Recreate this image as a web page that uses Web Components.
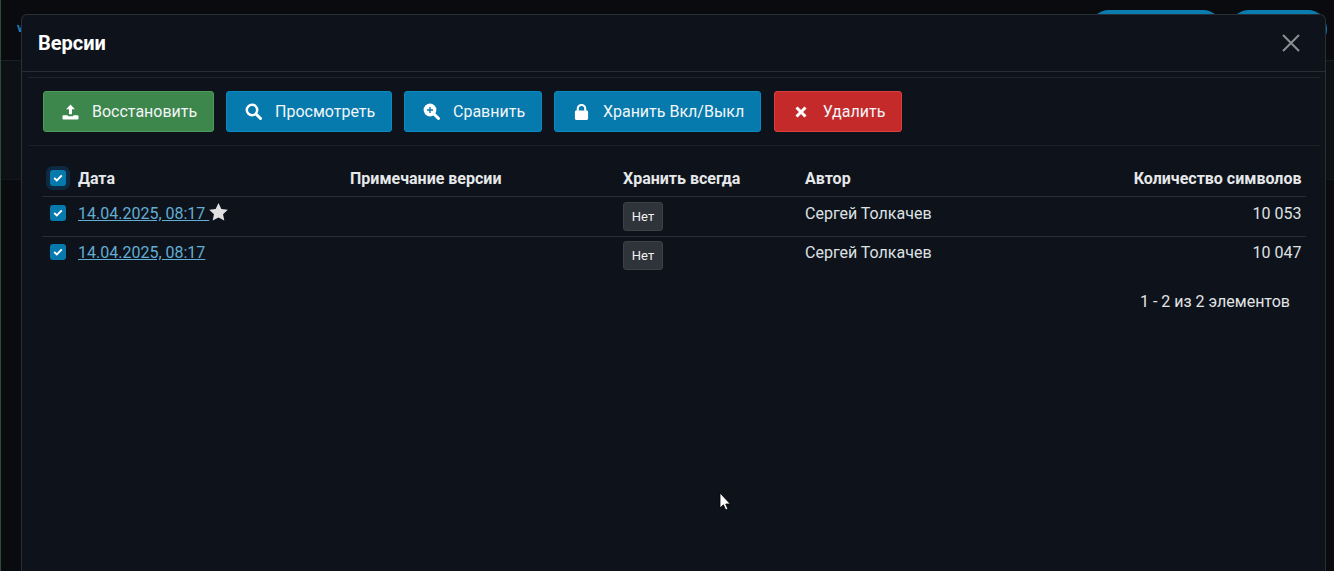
<!DOCTYPE html>
<html lang="ru"><head><meta charset="utf-8"><title>Версии</title>
<style>
html,body{margin:0;height:100%;overflow:hidden;background:#0a0c10;font-family:Roboto,"Liberation Sans",sans-serif;color:#e6e8ea}
a{color:#62add4;white-space:pre}
</style></head><body>
<template id="t-backdrop"><style>
:host{display:block;height:571px;background:#090b0f;border-left:1px solid #2e4a38;box-sizing:border-box;overflow:hidden}
.top{height:61px;box-sizing:border-box;border-bottom:1px solid #1a2027;display:flex;align-items:flex-start;padding:10px 7px 0 16px}
.v{color:#1f7fb8;font:700 12px Roboto,sans-serif;margin-top:11px}
.sp{flex:1}
.pill{height:38px;border-radius:19px;background:#0a7cb0;margin-left:8px}
.a{width:132px}.b{width:97px}
.rest{height:118px;background:#0d1116;border-bottom:1px solid #12171d}
</style><div class="top"><span class="v">v</span><span class="sp"></span><span class="pill a"></span><span class="pill b"></span></div><div class="rest"></div></template>

<template id="t-dialog"><style>
:host{display:block;position:absolute;left:21px;top:14px;width:1305px;height:557px;box-sizing:border-box;background:#0e131b;border:1px solid #2a2f35;border-bottom:0;border-radius:6px 6px 0 0;overflow:hidden}
header{height:57px;box-sizing:border-box;border-bottom:1px solid #2a2e34;display:flex;align-items:center;justify-content:space-between;padding:0 23px 0 16px}
h2{margin:0;font:700 20px/1 Roboto,sans-serif;color:#fff}
button{all:unset;display:flex;width:22px;height:22px;align-items:center;justify-content:center}
.body{margin:5px 5px 0 6px;border-top:1px solid #1f242a}
</style><header><h2><slot name="title"></slot></h2><button aria-label="Закрыть"><svg width="18" height="18" viewBox="0 0 18 18"><path d="M1 1l16 16M17 1L1 17" stroke="#8b8e92" stroke-width="2" fill="none"/></svg></button></header><div class="body"><slot></slot></div></template>

<template id="t-toolbar"><style>
:host{display:flex;gap:11.8px;padding:13px 15px 13px;border-bottom:1px solid #1a1f26}
</style><slot></slot></template>

<template id="t-btn"><style>
:host{display:flex;align-items:center;height:41px;box-sizing:border-box;padding:0 16px 0 18px;gap:13px;border-radius:3px;border:1px solid var(--bd,#0b8ac2);background:var(--bg,#0679ad);color:#f2f6f8;font:400 16px Roboto,sans-serif;white-space:nowrap}
:host([tone=green]){--bg:#3d864c;--bd:#4c9a5c}
:host([tone=red]){--bg:#c42a2a;--bd:#d84040;margin-left:.7px}
.i{display:flex;width:17px;justify-content:center}
</style><span class="i"><slot name="icon"></slot></span><slot></slot></template>

<template id="t-table"><style>
:host{display:block;margin:14px 14px 0 14px}
.foot{display:flex;justify-content:flex-end;padding:15px 16px 0 0;font:400 16px/1.2 Roboto,sans-serif;color:#e2e4e6}
</style><slot></slot><div class="foot"><slot name="foot"></slot></div></template>

<template id="t-row"><style>
:host{display:grid;grid-template-columns:36px 272px 273px 182px 1fr auto;box-sizing:border-box;height:40px;padding:7px 4.5px 0 0;border-bottom:1px solid #2a2e34;font:400 16px/20px Roboto,sans-serif;color:#dfe1e4}
:host([head]){height:37px;padding-top:9px;font-weight:700;color:#e6e8ea}
:host([compact]){padding-top:6px;border-bottom:0}
::slotted(:last-child){text-align:right}
</style><slot></slot></template>

<template id="t-check"><style>
:host{display:flex;align-items:flex-start;padding:1px 0 0 8px}
span{display:flex;width:16px;height:16px;border-radius:3px;background:#0679ad;align-items:center;justify-content:center}
:host([focus]) span{box-shadow:0 0 0 4px #0e2a42}
</style><span><svg width="10" height="8" viewBox="0 0 10 8"><path d="M1.200 4l2.600 2.500L8.800 1.300" stroke="#fff" stroke-width="1.900" fill="none"/></svg></span></template>

<template id="t-badge"><style>
:host{display:inline-flex;width:40px;height:29px;margin-top:-2px;box-sizing:border-box;align-items:center;justify-content:center;background:#2f343b;border:1px solid #3b4047;border-radius:3px;color:#f1f2f3;font:400 13px Roboto,sans-serif}
</style><slot></slot></template>

<template id="t-cursor"><style>
:host{display:block;position:absolute;left:719px;top:492px;width:13px;height:20px}
</style><svg width="13" height="20" viewBox="0 0 13 20"><path d="M1 1v15l3.400-3.200L6.700 18l2.200-1-2.200-5h4.600z" fill="#fff" stroke="#000" stroke-width=".8"/></svg></template>

<app-backdrop></app-backdrop>
<version-dialog>
  <span slot="title">Версии</span>
  <version-toolbar>
    <tool-button tone="green"><svg slot="icon" width="17" height="16" viewBox="0 0 18 16"><path d="M9 0l4.600 5h-3v5.500H7.400V5h-3zM1.500 11.500h4.700v1h5.600v-1h4.700q1 0 1 1V15q0 1-1 1H1.500q-1 0-1-1v-2.500q0-1 1-1z" fill="#fff"/></svg>Восстановить</tool-button>
    <tool-button><svg slot="icon" width="17" height="17" viewBox="0 0 17 17"><circle cx="7" cy="7" r="5.200" stroke="#fff" stroke-width="2.500" fill="none"/><path d="M11 11l4.500 4.500" stroke="#fff" stroke-width="3" stroke-linecap="round"/></svg>Просмотреть</tool-button>
    <tool-button><svg slot="icon" width="17" height="17" viewBox="0 0 17 17"><circle cx="7" cy="7" r="6.400" fill="#fff"/><path d="M11 11l4.500 4.500" stroke="#fff" stroke-width="3" stroke-linecap="round"/><path d="M7 4v6M4 7h6" stroke="#0679ad" stroke-width="1.400"/></svg>Сравнить</tool-button>
    <tool-button><svg slot="icon" width="15" height="16" viewBox="0 0 15 17"><path d="M3.500 8V5a4 4 0 018 0v3" stroke="#fff" stroke-width="2.200" fill="none"/><rect x=".5" y="7" width="14" height="10" rx="1.500" fill="#fff"/></svg>Хранить Вкл/Выкл</tool-button>
    <tool-button tone="red"><svg slot="icon" width="12" height="12" viewBox="0 0 12 12"><path d="M1.500 1.500l9 9M10.500 1.500l-9 9" stroke="#fff" stroke-width="3"/></svg>Удалить</tool-button>
  </version-toolbar>
  <version-table>
    <version-row head><check-box focus></check-box><span>Дата</span><span>Примечание версии</span><span>Хранить всегда</span><span>Автор</span><span>Количество символов</span></version-row>
    <version-row><check-box></check-box><span style="display:flex;align-items:flex-start"><a href="#">14.04.2025, 08:17 </a><svg width="19" height="18" viewBox="0 0 18 17" style="margin:-1px 0 0 0"><path d="M9 0l2.700 5.600 6.100.8-4.500 4.200 1.200 6L9 13.700 3.500 16.600l1.200-6L.2 6.400l6.100-.8z" fill="#e0e0e0"/></svg></span><span></span><span><state-badge>Нет</state-badge></span><span>Сергей Толкачев</span><span>10 053</span></version-row>
    <version-row compact><check-box></check-box><span><a href="#">14.04.2025, 08:17</a></span><span></span><span><state-badge>Нет</state-badge></span><span>Сергей Толкачев</span><span>10 047</span></version-row>
    <span slot="foot">1 - 2 из 2 элементов</span>
  </version-table>
</version-dialog>
<mouse-cursor></mouse-cursor>
<script>
for (const [tag, id] of [['app-backdrop','t-backdrop'],['version-dialog','t-dialog'],['version-toolbar','t-toolbar'],['tool-button','t-btn'],['version-table','t-table'],['version-row','t-row'],['check-box','t-check'],['state-badge','t-badge'],['mouse-cursor','t-cursor']]) {
  customElements.define(tag, class extends HTMLElement {
    constructor(){super();this.attachShadow({mode:'open'}).appendChild(document.getElementById(id).content.cloneNode(true));}
  });
}
</script>
</body></html>
